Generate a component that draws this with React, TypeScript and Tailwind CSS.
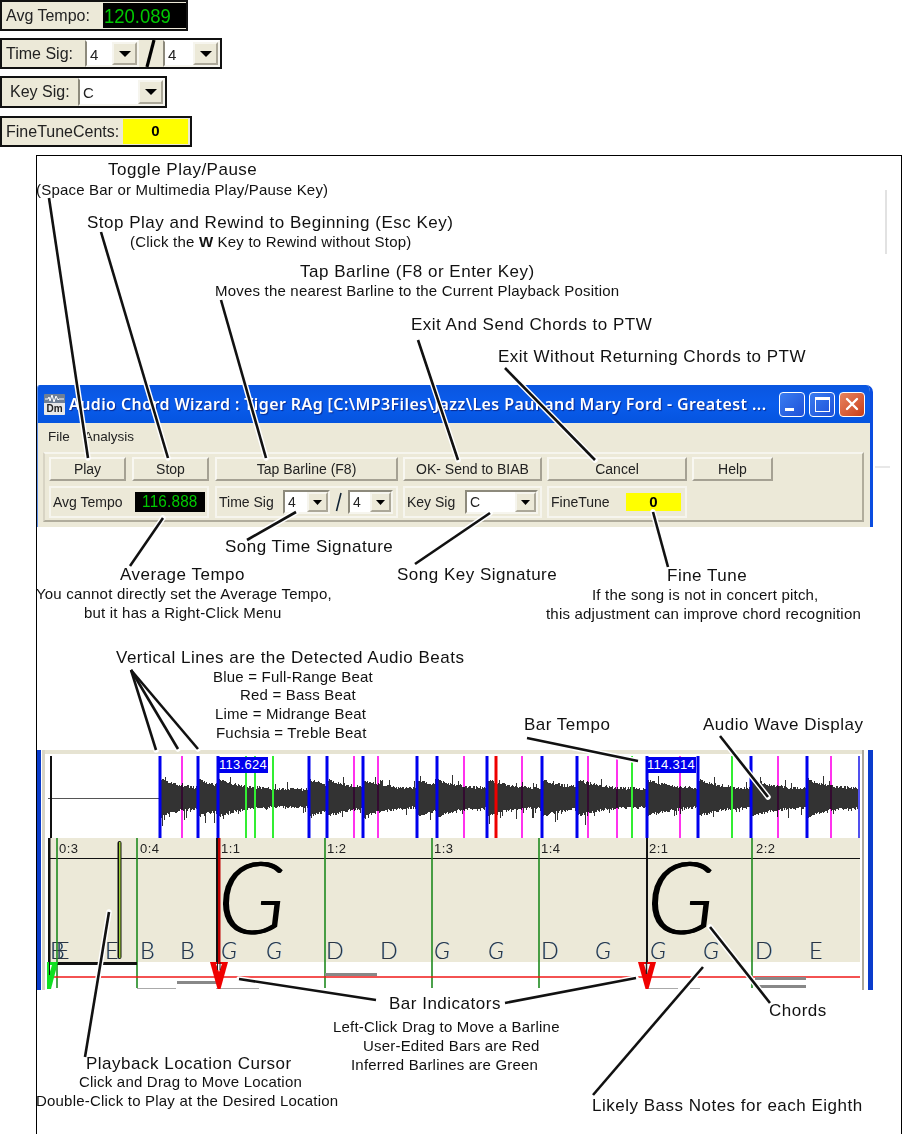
import React from 'react';

const blueBeats = [160, 198, 218, 309, 327, 363, 417, 437, 487, 542, 577, 647, 698, 751, 807];
const pinkBeats = [182, 354, 378, 464, 522, 588, 617, 680, 778, 831];
const limeBeats = [246, 255, 273, 632, 732];
const barLabels = [
  { x: 59, t: '0:3' },
  { x: 140, t: '0:4' },
  { x: 221, t: '1:1' },
  { x: 327, t: '1:2' },
  { x: 434, t: '1:3' },
  { x: 541, t: '1:4' },
  { x: 649, t: '2:1' },
  { x: 756, t: '2:2' },
];
const chordNotes = [
  { x: 50, t: 'B' },
  { x: 56, t: 'E' },
  { x: 105, t: 'E' },
  { x: 140, t: 'B' },
  { x: 180, t: 'B' },
  { x: 221, t: 'G' },
  { x: 266, t: 'G' },
  { x: 326, t: 'D' },
  { x: 380, t: 'D' },
  { x: 434, t: 'G' },
  { x: 488, t: 'G' },
  { x: 541, t: 'D' },
  { x: 595, t: 'G' },
  { x: 650, t: 'G' },
  { x: 703, t: 'G' },
  { x: 755, t: 'D' },
  { x: 809, t: 'E' },
];
const leaders = [
  '49,198 88,458',
  '101,232 168,458',
  '221,300 266,458',
  '418,340 458,460',
  '505,368 595,460',
  '163,518 130,566',
  '296,512 247,540',
  '490,513 415,564',
  '653,512 668,567',
  '131,670 156,750',
  '131,670 178,749',
  '131,670 198,749',
  '527,738 638,761',
  '720,736 768,797',
  '109,912 85,1057',
  '239,979 376,1000',
  '636,978 505,1003',
  '710,927 770,1003',
  '703,967 593,1095',
];

// seeded so the wave comes out the same on every load
function wavePath() {
  let seed = 7;
  const rnd = () => {
    seed = (seed * 1103515 + 12345) % 2147483;
    return seed / 2147483;
  };
  let d = '';
  for (let x = 160; x <= 859; x++) {
    const last = blueBeats.filter((b) => b <= x).pop() ?? 160;
    const env = 7 + 10 * Math.exp(-(x - last) / 24);
    const up = env + rnd() * 3 + (rnd() > 0.9 ? rnd() * 8 : 0);
    const down = env + rnd() * 3 + (rnd() > 0.88 ? rnd() * 10 : 0);
    d += `M${x} ${(798 - up).toFixed(0)}V${(798 + down).toFixed(0)}`;
  }
  return d;
}

const Note = ({ className, children }: { className: string; children: React.ReactNode }) => (
  <div className={`absolute z-20 h-[20px] whitespace-nowrap leading-[20px] text-[#111] ${className}`}>{children}</div>
);

const Arrow = ({ big }: { big?: boolean }) => (
  <svg width={big ? 12 : 9} height={big ? 6 : 5} viewBox="0 0 12 6" preserveAspectRatio="none">
    <path d="M0 0h12L6 6z" fill="#000" />
  </svg>
);

const Combo = ({ value, className, big }: { value: string; className: string; big?: boolean }) => (
  <div className={`flex items-stretch border-2 bg-white ${big ? 'border-t-white border-l-[#8d8a7c] border-r-[#f6f5ee] border-b-[#f6f5ee]' : 'border-t-[#8d8a7c] border-l-[#8d8a7c] border-r-[#f6f5ee] border-b-[#f6f5ee]'} ${className}`}>
    <div className={`flex-1 pl-[3px] text-[#222] ${big ? 'text-[15px] leading-[26px]' : 'text-[14px] leading-[20px]'}`}>{value}</div>
    <div className={`flex items-center justify-center border-2 border-t-[#f6f5ee] border-l-[#f6f5ee] border-r-[#aca899] border-b-[#aca899] bg-[#ece9d8] ${big ? 'w-[25px]' : 'w-[21px]'}`}>
      <Arrow big={big} />
    </div>
  </div>
);

const Btn = ({ children, className }: { children: React.ReactNode; className: string }) => (
  <div className={`flex h-[24px] items-center justify-center border-2 border-t-[#f8f7f1] border-l-[#f8f7f1] border-r-[#a5a193] border-b-[#a5a193] bg-[#ece9d8] text-[14px] text-[#222] ${className}`}>
    {children}
  </div>
);

const Group = ({ children, className }: { children: React.ReactNode; className: string }) => (
  <div className={`flex h-[32px] items-center border-2 border-[#f6f5ee] pl-[2px] text-[14px] text-[#222] ${className}`}>{children}</div>
);

const Bar = ({ children, className }: { children: React.ReactNode; className: string }) => (
  <div className={`flex items-stretch border-2 border-[#111] bg-[#ece9d8] text-[16px] text-[#222] ${className}`}>{children}</div>
);

const Caption = ({ className, children }: { className: string; children: React.ReactNode }) => (
  <div className={`flex h-[25px] w-[26px] items-center justify-center rounded-[4px] border border-white ${className}`}>{children}</div>
);

function AppWindow() {
  return (
    <div className="ml-0 mt-[229px] flex h-[142px] w-[836px] flex-col overflow-hidden rounded-tr-[7px] rounded-tl-[3px] border-r-[3px] border-l border-r-[#0b4de0] border-l-[#5f8fe8] bg-[#ece9d8]">
      <div className="flex h-[38px] shrink-0 items-center bg-gradient-to-b from-[#0a56e0] via-[#0a5cec] to-[#0554df] pl-[6px] pr-[5px]">
        <div className="flex h-[21px] w-[21px] shrink-0 flex-col items-center overflow-hidden rounded-[1px] bg-[#6f7f95]">
          <svg width="21" height="9" viewBox="0 0 21 9">
            <path d="M1 5h3l1-2 1 4 2-6 2 7 2-6 2 4 1-1h5" fill="none" stroke="#fff" strokeWidth="1" />
          </svg>
          <div className="h-[12px] w-full bg-[#e8e8e8] text-center text-[10px] font-bold leading-[12px] text-[#222]">Dm</div>
        </div>
        <div className="ml-[4px] min-w-0 flex-1 overflow-hidden whitespace-nowrap font-['Noto_Sans',sans-serif] text-[16px] font-semibold tracking-[0.4px] text-white [text-shadow:1px_1px_1px_#0a2a90]">
          Audio Chord Wizard : Tiger RAg [C:\MP3Files\Jazz\Les Paul and Mary Ford - Greatest ...
        </div>
        <div className="flex shrink-0 gap-[4px]">
          <Caption className="bg-gradient-to-br from-[#3b7cf0] to-[#1f50d8]">
            <div className="mt-[11px] mr-[6px] h-[3px] w-[9px] bg-white" />
          </Caption>
          <Caption className="bg-gradient-to-br from-[#3b7cf0] to-[#1f50d8]">
            <div className="h-[15px] w-[15px] border border-t-[3px] border-white" />
          </Caption>
          <Caption className="bg-gradient-to-br from-[#e8845f] to-[#c83c14]">
            <svg width="14" height="14" viewBox="0 0 14 14">
              <path d="M2 2l10 10M12 2L2 12" stroke="#fff" strokeWidth="2.4" strokeLinecap="round" />
            </svg>
          </Caption>
        </div>
      </div>
      <div className="flex h-[29px] shrink-0 items-center gap-[14px] pl-[10px] text-[13.5px] text-[#222]">
        <span>File</span>
        <span>Analysis</span>
      </div>
      <div className="ml-[5px] flex h-[70px] w-[821px] flex-col gap-[5px] border-2 border-t-[#f6f5ee] border-l-[#d8d4c4] border-r-[#b0ac9c] border-b-[#b0ac9c] pl-[4px] pt-[3px]">
        <div className="flex">
          <Btn className="w-[77px]">Play</Btn>
          <Btn className="ml-[6px] w-[77px]">Stop</Btn>
          <Btn className="ml-[6px] w-[183px]">Tap Barline (F8)</Btn>
          <Btn className="ml-[5px] w-[139px]">OK- Send to BIAB</Btn>
          <Btn className="ml-[5px] w-[140px]">Cancel</Btn>
          <Btn className="ml-[5px] w-[81px]">Help</Btn>
        </div>
        <div className="flex">
          <Group className="w-[160px]">
            <span className="w-[82px]">Avg Tempo</span>
            <div className="flex h-[20px] w-[70px] items-center justify-center bg-black text-[17px] tracking-[0.2px] text-[#00c800]">
              <span className="scale-x-[0.9]">116.888</span>
            </div>
          </Group>
          <Group className="ml-[6px] w-[183px]">
            <span className="w-[64px]">Time Sig</span>
            <Combo value="4" className="h-[24px] w-[47px]" />
            <svg width="18" height="22" viewBox="0 0 18 22">
              <path d="M6.5 20L11 2" stroke="#123" strokeWidth="1.6" />
            </svg>
            <Combo value="4" className="h-[24px] w-[45px]" />
          </Group>
          <Group className="ml-[5px] w-[139px]">
            <span className="w-[58px]">Key Sig</span>
            <Combo value="C" className="h-[24px] w-[73px]" />
          </Group>
          <Group className="ml-[5px] w-[140px]">
            <span className="w-[75px]">FineTune</span>
            <div className="flex h-[18px] w-[55px] items-center justify-center bg-[#ffff00] text-[15px] font-bold text-black">0</div>
          </Group>
        </div>
      </div>
    </div>
  );
}

function WavePanel() {
  return (
    <div className="mt-[223px] flex h-[240px] w-[838px]">
      <div className="w-[4px] bg-[#0a3ccc]" />
      <div className="ml-[1px] w-[3px] bg-[#d8d5c6]" />
      <div className="relative flex w-[817px] flex-col">
        <div className="mb-[1px] h-[4px] bg-[#e6e3d2]" />
        <div className="h-[83px] bg-white" />
        <div className="ml-[3px] mr-[2px] h-[124px] bg-[#ece9d8]" />
        <div className="h-[28px] bg-white" />

        {chordNotes.map((n, i) => (
          <span
            key={i}
            className={`absolute top-[188px] font-['Lato',sans-serif] text-[23px] font-light leading-[24px] text-[#2b3340] [text-shadow:0.5px_0_0_#6aa0d0] ${n.t === 'G' ? 'italic' : ''}`}
            style={{ left: n.x - 45 }}
          >
            {n.t}
          </span>
        ))}
        <span className="absolute left-[172px] top-[109px] font-['Lato',sans-serif] text-[100px] font-light italic leading-[72px] text-black [text-shadow:1px_0_0_#000]">G</span>
        <span className="absolute left-[601px] top-[109px] font-['Lato',sans-serif] text-[100px] font-light italic leading-[72px] text-black [text-shadow:1px_0_0_#000]">G</span>

        {barLabels.map((b) => (
          <span key={b.t} className="absolute top-[91px] text-[13px] leading-[16px] tracking-[0.4px] text-[#222]" style={{ left: b.x - 45 }}>
            {b.t}
          </span>
        ))}

        {/* the timeline drawing uses page coordinates, hence the shifted viewBox */}
        <svg className="absolute left-0 top-0" width="817" height="240" viewBox="45 750 817 240">
          <path d="M48 798.5H160" stroke="#555" strokeWidth="1" />
          <path d={wavePath()} stroke="#333" strokeWidth="1" fill="none" shapeRendering="crispEdges" />
          {pinkBeats.map((x) => (
            <line key={x} x1={x} x2={x} y1="756" y2="838" stroke="#ff33ee" strokeWidth="2" className="mix-blend-multiply" />
          ))}
          {limeBeats.map((x) => (
            <line key={x} x1={x} x2={x} y1="756" y2="838" stroke="#33ee33" strokeWidth="2" />
          ))}
          {blueBeats.map((x) => (
            <line key={x} x1={x} x2={x} y1="756" y2="838" stroke="#0000ee" strokeWidth="3" />
          ))}
          <line x1="859" x2="859" y1="756" y2="838" stroke="#5050ee" strokeWidth="2" />
          <line x1="496" x2="496" y1="756" y2="838" stroke="#ee0000" strokeWidth="3" />
          <line x1="51" x2="51" y1="756" y2="838" stroke="#111" strokeWidth="2" />

          <path d="M48 858.5H860" stroke="#111" strokeWidth="1.2" />
          {[57, 137, 325, 432, 539, 752].map((x) => (
            <line key={x} x1={x} x2={x} y1="838" y2="988" stroke="#1f8a1f" strokeWidth="1.6" />
          ))}
          <rect x="48" y="838" width="2.5" height="150" fill="#111" />
          <rect x="646" y="838" width="2" height="128" fill="#111" />
          <rect x="216" y="838" width="2" height="128" fill="#111" />
          <rect x="218" y="838" width="2.5" height="128" fill="#c00000" />
          <rect x="117.5" y="841" width="4" height="118" rx="2" fill="#111" />
          <rect x="119" y="842" width="1.5" height="116" fill="#9acd32" />

          <path d="M50 963.5H137" stroke="#111" strokeWidth="3" />
          <path d="M48 977H860" stroke="#f01818" strokeWidth="1.6" />
          <rect x="177" y="981" width="40" height="3" fill="#888" />
          <rect x="325" y="973" width="52" height="3" fill="#888" />
          <rect x="755" y="977" width="51" height="3" fill="#888" />
          <rect x="755" y="985" width="51" height="3" fill="#888" />
          <path d="M137 988.5H176M216 988.5H259M647 988.5H678M690 988.5H700" stroke="#aaa" strokeWidth="1" />

          <polygon points="47,962 58,962 51,989 47,989" fill="#10e020" />
          <polygon points="49,965 52,965 49,975" fill="#fff" />
          <path d="M49.5 962V975" stroke="#111" strokeWidth="1" />
          <polygon points="210,962 228,962 220.5,989 217.5,989" fill="#f00000" />
          <polygon points="216,964 222,964 219,972" fill="#fff" />
          <path d="M217.5 962V970M220 962V970" stroke="#222" strokeWidth="1" />
          <polygon points="638,962 656,962 648.5,989 645.5,989" fill="#f00000" />
          <polygon points="644,964 650,964 647,974" fill="#fff" />
          <path d="M646.5 962V974" stroke="#222" strokeWidth="1.5" />
        </svg>

        <div className="absolute left-[173px] top-[7px] h-[16px] w-[50px] bg-[#0000ee] text-center text-[13px] leading-[16px] tracking-[0.3px] text-white">113.624</div>
        <div className="absolute left-[601px] top-[7px] h-[16px] w-[50px] bg-[#0000ee] text-center text-[13px] leading-[16px] tracking-[0.3px] text-white">114.314</div>
      </div>
      <div className="w-[2px] bg-[#aca899]" />
      <div className="ml-[4px] w-[5px] bg-[#0a3ccc]" />
    </div>
  );
}

export default function App() {
  const head = 'text-[17px] tracking-[0.5px]';
  const sub = 'text-[15px] tracking-[0.2px]';
  return (
    <div className="relative h-[1134px] w-[902px] overflow-hidden bg-white font-['Liberation_Sans',Arial,sans-serif]">
      <div className="flex flex-col items-start">
        <Bar className="h-[31px] w-[188px]">
          <span className="w-[101px] pl-[4px] leading-[27px]">Avg Tempo:</span>
          <div className="my-[1px] flex w-[83px] items-center bg-black pl-[1px] text-[21px] text-[#00c800]">
            <span className="origin-left scale-x-[0.88]">120.089</span>
          </div>
        </Bar>
        <Bar className="mt-[7px] h-[31px] w-[222px]">
          <span className="w-[83px] pl-[4px] leading-[27px]">Time Sig:</span>
          <Combo big value="4" className="w-[54px]" />
          <svg width="24" height="27" viewBox="0 0 24 27">
            <path d="M8 27L15 0" stroke="#000" strokeWidth="3.2" />
          </svg>
          <Combo big value="4" className="w-[57px]" />
        </Bar>
        <Bar className="mt-[7px] h-[32px] w-[167px]">
          <span className="w-[76px] pl-[8px] leading-[28px]">Key Sig:</span>
          <Combo big value="C" className="w-[87px]" />
        </Bar>
        <Bar className="mt-[8px] h-[31px] w-[192px]">
          <span className="w-[121px] pl-[4px] leading-[27px]">FineTuneCents:</span>
          <div className="my-[1px] flex w-[65px] items-center justify-center bg-[#ffff00] text-[15px] font-bold text-black">0</div>
        </Bar>
        <div className="ml-[36px] mt-[8px] h-[980px] w-[866px] border border-black">
          <AppWindow />
          <WavePanel />
        </div>
      </div>

      <div className="absolute left-[885px] top-[190px] h-[64px] w-[2px] bg-[#e2e2e2]" />
      <div className="absolute left-[875px] top-[466px] h-[2px] w-[15px] bg-[#e8e8e8]" />

      <svg className="absolute left-0 top-0 z-10" width="902" height="1134" viewBox="0 0 902 1134">
        {leaders.map((p) => (
          <polyline key={p + 'h'} points={p} fill="none" stroke="#fff" strokeWidth="5.5" strokeLinecap="round" />
        ))}
        {leaders.map((p) => (
          <polyline key={p} points={p} fill="none" stroke="#111" strokeWidth="2.6" />
        ))}
      </svg>

      <Note className={`left-[108px] top-[160px] ${head}`}>Toggle Play/Pause</Note>
      <Note className={`left-[36px] top-[180px] ${sub}`}>(Space Bar or Multimedia Play/Pause Key)</Note>
      <Note className={`left-[87px] top-[213px] ${head}`}>Stop Play and Rewind to Beginning (Esc Key)</Note>
      <Note className={`left-[130px] top-[232px] ${sub}`}>(Click the <b>W</b> Key to Rewind without Stop)</Note>
      <Note className={`left-[300px] top-[262px] ${head}`}>Tap Barline (F8 or Enter Key)</Note>
      <Note className={`left-[215px] top-[281px] ${sub}`}>Moves the nearest Barline to the Current Playback Position</Note>
      <Note className={`left-[411px] top-[315px] ${head}`}>Exit And Send Chords to PTW</Note>
      <Note className={`left-[498px] top-[347px] ${head}`}>Exit Without Returning Chords to PTW</Note>
      <Note className={`left-[225px] top-[537px] ${head}`}>Song Time Signature</Note>
      <Note className={`left-[120px] top-[565px] ${head}`}>Average Tempo</Note>
      <Note className={`left-[36px] top-[584px] ${sub}`}>You cannot directly set the Average Tempo,</Note>
      <Note className={`left-[84px] top-[603px] ${sub}`}>but it has a Right-Click Menu</Note>
      <Note className={`left-[397px] top-[565px] ${head}`}>Song Key Signature</Note>
      <Note className={`left-[667px] top-[566px] ${head}`}>Fine Tune</Note>
      <Note className={`left-[592px] top-[585px] ${sub}`}>If the song is not in concert pitch,</Note>
      <Note className={`left-[546px] top-[604px] ${sub}`}>this adjustment can improve chord recognition</Note>
      <Note className={`left-[116px] top-[648px] ${head}`}>Vertical Lines are the Detected Audio Beats</Note>
      <Note className={`left-[213px] top-[667px] ${sub}`}>Blue = Full-Range Beat</Note>
      <Note className={`left-[240px] top-[685px] ${sub}`}>Red = Bass Beat</Note>
      <Note className={`left-[215px] top-[704px] ${sub}`}>Lime = Midrange Beat</Note>
      <Note className={`left-[216px] top-[723px] ${sub}`}>Fuchsia = Treble Beat</Note>
      <Note className={`left-[524px] top-[715px] ${head}`}>Bar Tempo</Note>
      <Note className={`left-[703px] top-[715px] ${head}`}>Audio Wave Display</Note>
      <Note className={`left-[389px] top-[994px] ${head}`}>Bar Indicators</Note>
      <Note className={`left-[333px] top-[1017px] ${sub}`}>Left-Click Drag to Move a Barline</Note>
      <Note className={`left-[363px] top-[1036px] ${sub}`}>User-Edited Bars are Red</Note>
      <Note className={`left-[351px] top-[1055px] ${sub}`}>Inferred Barlines are Green</Note>
      <Note className={`left-[769px] top-[1001px] ${head}`}>Chords</Note>
      <Note className={`left-[86px] top-[1054px] ${head}`}>Playback Location Cursor</Note>
      <Note className={`left-[79px] top-[1072px] ${sub}`}>Click and Drag to Move Location</Note>
      <Note className={`left-[36px] top-[1091px] ${sub}`}>Double-Click to Play at the Desired Location</Note>
      <Note className={`left-[592px] top-[1096px] ${head}`}>Likely Bass Notes for each Eighth</Note>
    </div>
  );
}
